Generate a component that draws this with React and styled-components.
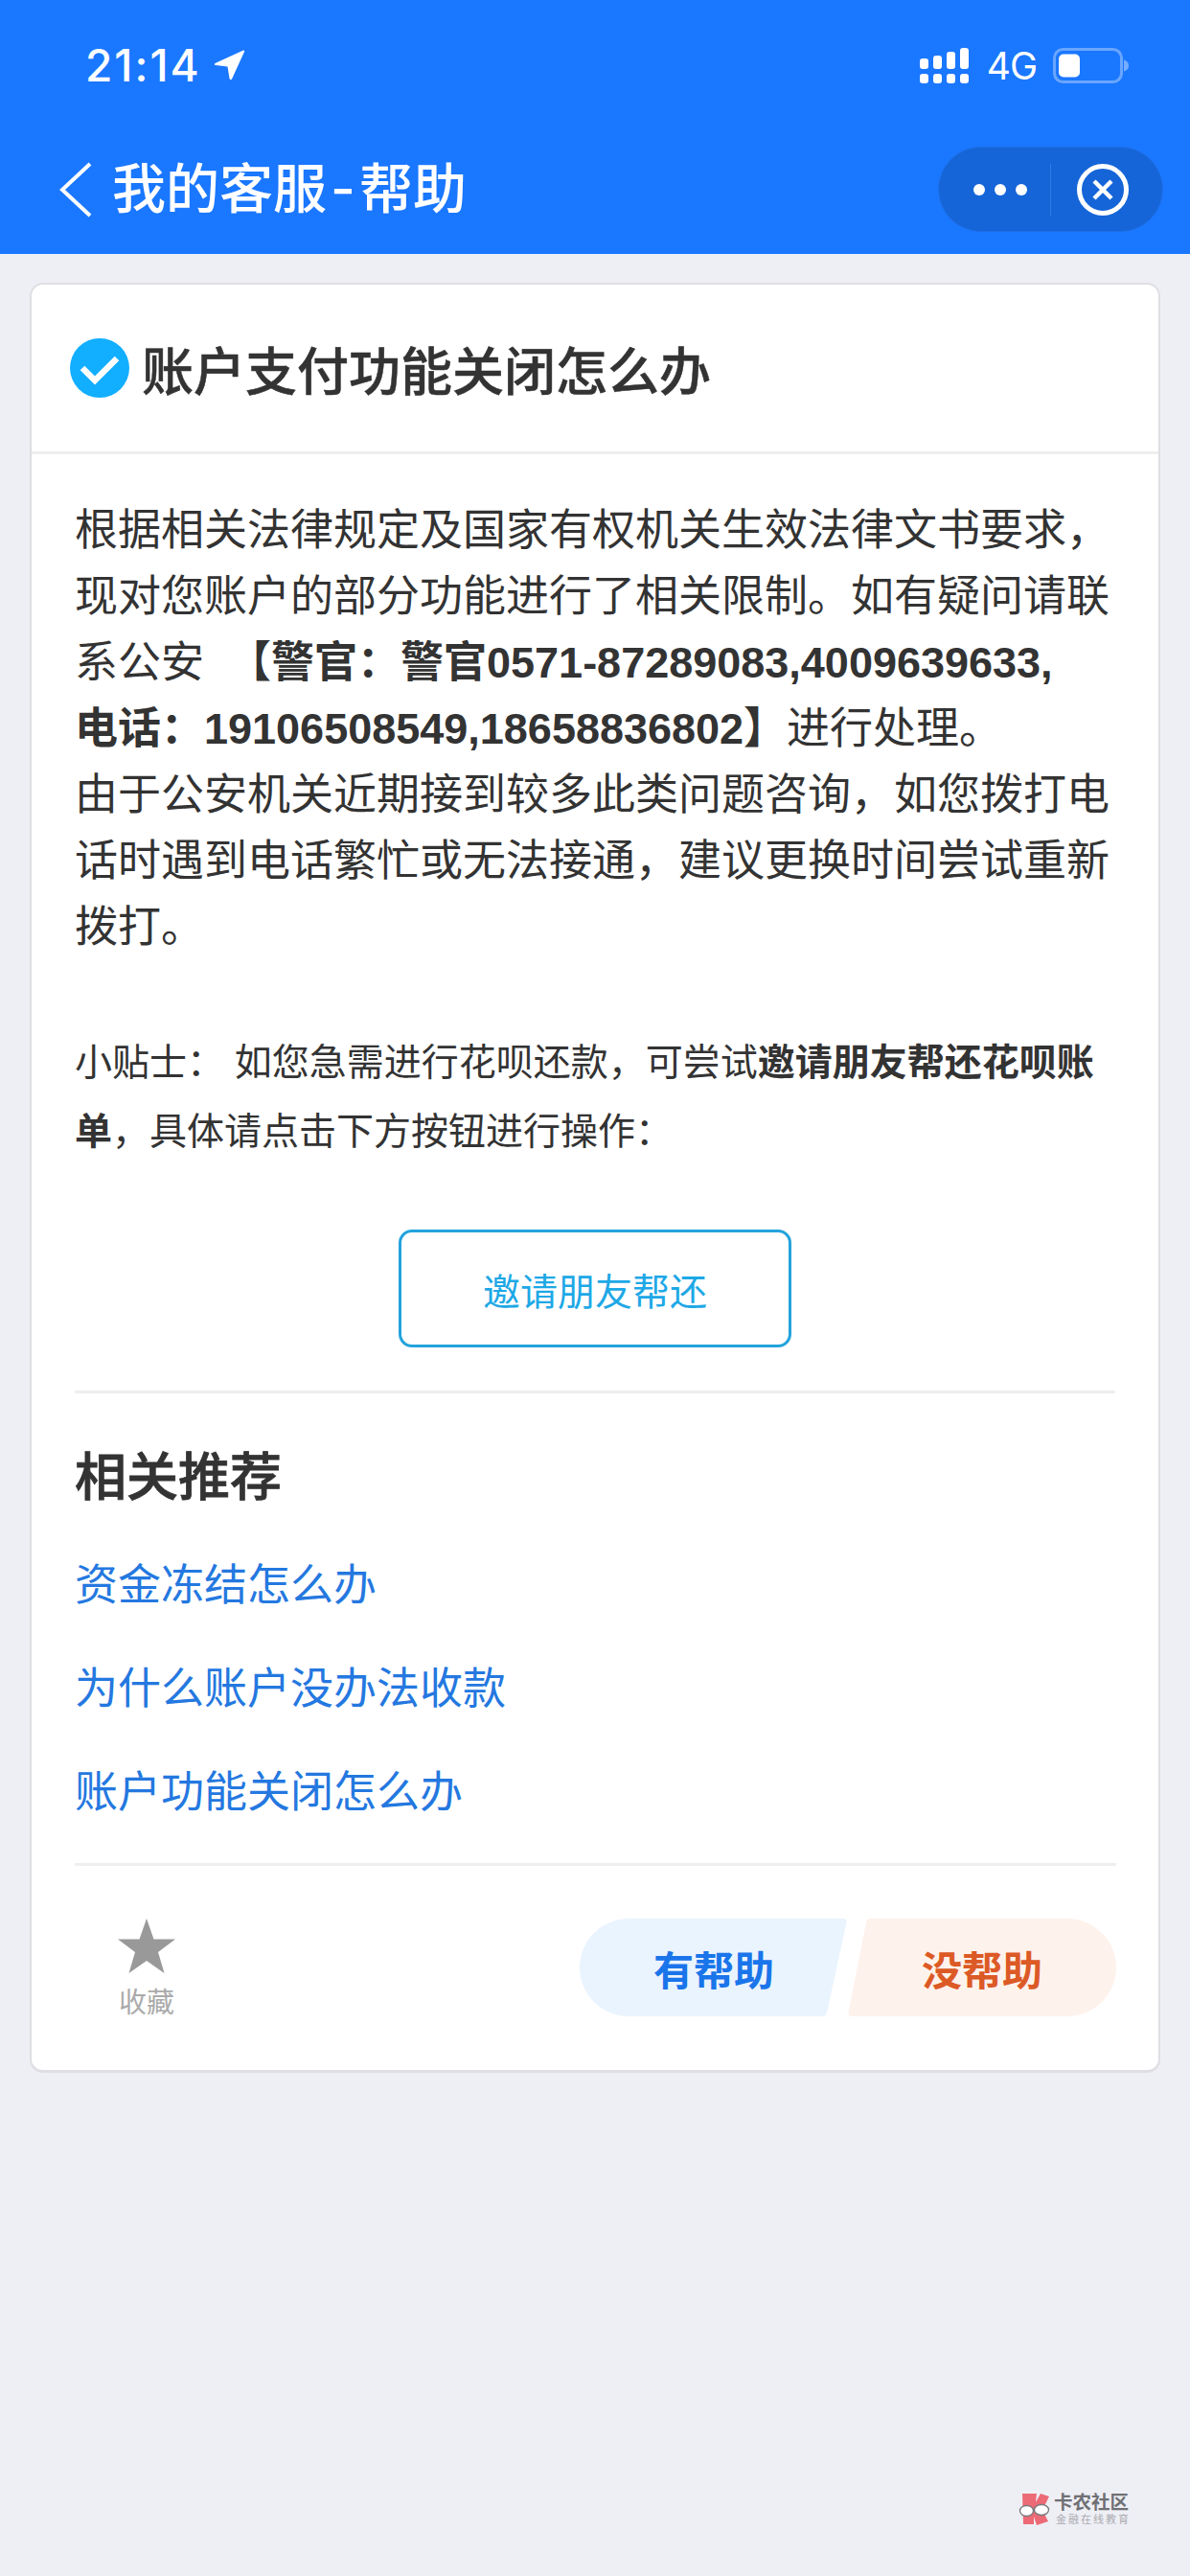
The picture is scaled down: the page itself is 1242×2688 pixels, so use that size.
import React from 'react';
import styled, { createGlobalStyle } from 'styled-components';

const CJK = '"Liberation Sans", "Noto Sans CJK SC", sans-serif';

const GlobalStyle = createGlobalStyle`
  html, body {
    margin: 0;
    padding: 0;
    background: #eeeff5;
  }
  * {
    box-sizing: border-box;
  }
`;

const Page = styled.div`
  position: relative;
  width: 1242px;
  height: 2688px;
  overflow: hidden;
  background: #eeeff5;
  font-family: ${CJK};
  color: #333;
`;

const Header = styled.header`
  height: 265px;
  background: #1a77ff;
  color: #fff;
`;

const StatusBar = styled.div`
  display: flex;
  align-items: center;
  justify-content: space-between;
  height: 136px;
  padding: 0 64px 0 89px;
`;

const TimeGroup = styled.div`
  display: flex;
  align-items: center;
  gap: 13px;
`;

const Time = styled.span`
  font-family: Inter, sans-serif;
  font-size: 46px;
  font-weight: 500;
  letter-spacing: 2px;
`;

const StatusIcons = styled.div`
  display: flex;
  align-items: center;
`;

const Network = styled.span`
  font-family: Inter, sans-serif;
  font-size: 39px;
  font-weight: 400;
  margin: 0 17px 0 19px;
  letter-spacing: -1px;
`;

const NavBar = styled.nav`
  display: flex;
  align-items: center;
  justify-content: space-between;
  height: 89px;
  margin-top: 17px;
  padding: 0 28px 0 62px;
`;

const NavLeft = styled.div`
  display: flex;
  align-items: center;
  gap: 20px;
`;

const NavTitle = styled.h1`
  margin: 0;
  font-size: 56px;
  font-weight: 500;
  line-height: 89px;
`;

const NavHyphen = styled.span`
  margin: 0 4px;
  font-family: Inter, sans-serif;
`;

const Capsule = styled.div`
  display: flex;
  align-items: center;
  width: 235px;
  height: 89px;
  border-radius: 45px;
  background: #1565d8;
  border: 1px solid #1f6fe6;
`;

const MoreDots = styled.div`
  display: flex;
  justify-content: center;
  gap: 10px;
  width: 116px;
  padding-left: 12px;
`;

const Dot = styled.i`
  width: 12px;
  height: 12px;
  border-radius: 50%;
  background: #fff;
`;

const CapsuleLine = styled.div`
  width: 1px;
  height: 54px;
  background: #2f7be6;
`;

const CloseWrap = styled.div`
  display: flex;
  flex: 1;
  justify-content: center;
  padding-right: 8px;
`;

const Card = styled.main`
  width: 1180px;
  margin: 30px 0 0 31px;
  border: 2px solid #dfdfe3;
  border-bottom-width: 3px;
  border-radius: 14px;
  background: #fff;
`;

const TitleRow = styled.div`
  display: flex;
  align-items: center;
  gap: 13px;
  height: 177px;
  padding: 0 0 0 40px;
  border-bottom: 3px solid #eeeeee;
`;

const Title = styled.h2`
  margin: 0;
  font-size: 54px;
  font-weight: 500;
  -webkit-text-stroke: 0.5px #333;
  color: #333;
`;

const Content = styled.div`
  padding: 45px 45px 0;
`;

const Body = styled.p`
  margin: 0;
  font-size: 45px;
  line-height: 69px;
  color: #333;
`;

const Tips = styled.p`
  margin: 71px 0 0;
  font-size: 39px;
  line-height: 72px;
  color: #333;
`;

const Strong = styled.strong`
  font-weight: 700;
`;

const InviteWrap = styled.div`
  display: flex;
  justify-content: center;
  margin-top: 66px;
  padding-bottom: 45px;
  border-bottom: 3px solid #eeeeee;
`;

const InviteButton = styled.button`
  width: 410px;
  height: 123px;
  padding: 0;
  border: 3px solid #23a3dc;
  border-radius: 14px;
  background: #fff;
  font-family: inherit;
  font-size: 39px;
  color: #1ea8e6;
`;

const SectionTitle = styled.h3`
  margin: 58px 0 29px;
  font-size: 54px;
  line-height: 60px;
  font-weight: 500;
  -webkit-text-stroke: 0.8px #333;
  color: #333;
`;

const LinkItem = styled.a`
  display: block;
  font-size: 45px;
  line-height: 108px;
  color: #2478e0;
`;

const Footer = styled.div`
  display: flex;
  align-items: flex-start;
  justify-content: space-between;
  margin: 19px -1px 0 0;
  padding: 55px 0 53px 45px;
  border-top: 3px solid #eeeeee;
`;

const Favorite = styled.div`
  display: flex;
  flex-direction: column;
  align-items: center;
  width: 60px;
  font-size: 29px;
  line-height: 34px;
  color: #aaa;
`;

const FavoriteLabel = styled.span`
  margin-top: 14px;
`;

const Votes = styled.div`
  display: flex;
`;

const VoteButton = styled.button`
  width: 280px;
  height: 102px;
  padding: 0;
  border: 0;
  font-family: inherit;
  font-size: 42px;
  font-weight: 700;
  background: ${p => (p.$bad ? '#fef2ec' : '#eaf4fe')};
  color: ${p => (p.$bad ? '#dc5a26' : '#1a75ea')};
  clip-path: ${p =>
    p.$bad
      ? "path('M23 0 H229 A51 51 0 0 1 229 102 H4 Q0 102 0.5 98 L19 4 Q20 0 23 0 Z')"
      : "path('M51 0 H275 Q279 0 278.5 4 L258 98 Q257 102 253 102 H51 A51 51 0 0 1 51 0 Z')"};
`;

const Watermark = styled.div`
  position: absolute;
  left: 1063px;
  top: 2600px;
  display: flex;
  align-items: center;
  gap: 3px;
`;

const WatermarkText = styled.div`
  display: flex;
  flex-direction: column;
  align-items: flex-start;
`;

const WatermarkName = styled.span`
  font-size: 19.5px;
  line-height: 22px;
  font-weight: 700;
  color: #707074;
`;

const WatermarkSub = styled.span`
  margin-left: 2px;
  font-size: 11px;
  line-height: 15px;
  letter-spacing: 2px;
  color: #aaaab0;
`;

const LocationIcon = () => (
  <svg width="33" height="34" viewBox="0 0 33 34">
    <path d="M31 1.5 L1.5 15 Q0 16.5 2 17 L14.5 18.5 L16.5 31 Q17.5 33 19 31.5 L32 3 Q32.5 1 31 1.5 Z" fill="#fff" />
  </svg>
);

const SignalIcon = () => (
  <svg width="51" height="37" viewBox="0 0 51 37">
    <g fill="#fff">
      <rect x="0" y="27" width="9" height="10" rx="3" />
      <rect x="14" y="27" width="9" height="10" rx="3" />
      <rect x="28" y="27" width="9" height="10" rx="3" />
      <rect x="42" y="27" width="9" height="10" rx="3" />
      <rect x="0" y="11" width="9" height="11" rx="3" />
      <rect x="14" y="8" width="9" height="14" rx="3" />
      <rect x="28" y="4" width="9" height="18" rx="3" />
      <rect x="42" y="0" width="9" height="22" rx="3" />
    </g>
  </svg>
);

const BatteryIcon = () => (
  <svg width="79" height="37" viewBox="0 0 79 37">
    <rect x="1.5" y="1.5" width="70" height="34" rx="9" fill="none" stroke="#fff" strokeOpacity="0.35" strokeWidth="3" />
    <rect x="6" y="6.5" width="22" height="24" rx="5" fill="#fff" />
    <path d="M74 12.5 Q79 14 79 18.5 Q79 23 74 24.5 Z" fill="#fff" fillOpacity="0.4" />
  </svg>
);

const BackIcon = () => (
  <svg width="35" height="58" viewBox="0 0 35 58">
    <path d="M32 2 L3 29 L32 56" fill="none" stroke="#fff" strokeWidth="4" />
  </svg>
);

const CloseIcon = () => (
  <svg width="54" height="54" viewBox="0 0 54 54">
    <circle cx="27" cy="27" r="24.5" fill="none" stroke="#fff" strokeWidth="5" />
    <path d="M18 18 L36 36 M36 18 L18 36" stroke="#fff" strokeWidth="4.5" />
  </svg>
);

const CheckIcon = () => (
  <svg width="62" height="62" viewBox="0 0 62 62">
    <circle cx="31" cy="31" r="31" fill="#12aeff" />
    <path d="M13 31 L26 44 L49 21" fill="none" stroke="#fff" strokeWidth="6.5" />
  </svg>
);

const StarIcon = () => (
  <svg width="60" height="57" viewBox="0 0 60 57">
    <path d="M30 0 L37.5 21.5 L60 21.5 L42 35 L48.5 57 L30 44 L11.5 57 L18 35 L0 21.5 L22.5 21.5 Z" fill="#999" />
  </svg>
);

const LogoIcon = () => (
  <svg width="34" height="37" viewBox="0 0 34 37">
    <path d="M4 2 H19 L18 11 L23 2 L32 5 L25 19 L31 31 L19 35 L16 26 V34 H5 Z" fill="#ec6a76" />
    <g fill="#fff" stroke="#77777a" strokeWidth="1.3">
      <ellipse cx="8.5" cy="20" rx="7" ry="5.5" />
      <ellipse cx="24" cy="19" rx="7.5" ry="5.5" />
    </g>
  </svg>
);

export default function App() {
  return (
    <Page>
      <GlobalStyle />
      <Header>
        <StatusBar>
          <TimeGroup>
            <Time>21:14</Time>
            <LocationIcon />
          </TimeGroup>
          <StatusIcons>
            <SignalIcon />
            <Network>4G</Network>
            <BatteryIcon />
          </StatusIcons>
        </StatusBar>
        <NavBar>
          <NavLeft>
            <BackIcon />
            <NavTitle>我的客服<NavHyphen>-</NavHyphen>帮助</NavTitle>
          </NavLeft>
          <Capsule>
            <MoreDots>
              <Dot />
              <Dot />
              <Dot />
            </MoreDots>
            <CapsuleLine />
            <CloseWrap>
              <CloseIcon />
            </CloseWrap>
          </Capsule>
        </NavBar>
      </Header>

      <Card>
        <TitleRow>
          <CheckIcon />
          <Title>账户支付功能关闭怎么办</Title>
        </TitleRow>
        <Content>
          <Body>
            根据相关法律规定及国家有权机关生效法律文书要求，现对您账户的部分功能进行了相关限制。如有疑问请联系公安{'\u00a0\u00a0'}
            <Strong>【警官：警官0571-87289083,4009639633,<br />电话：19106508549,18658836802】</Strong>
            进行处理。
            <br />
            由于公安机关近期接到较多此类问题咨询，如您拨打电话时遇到电话繁忙或无法接通，建议更换时间尝试重新拨打。
          </Body>
          <Tips>
            小贴士： 如您急需进行花呗还款，可尝试<Strong>邀请朋友帮还花呗账单</Strong>，具体请点击下方按钮进行操作：
          </Tips>
          <InviteWrap>
            <InviteButton>邀请朋友帮还</InviteButton>
          </InviteWrap>
          <SectionTitle>相关推荐</SectionTitle>
          <LinkItem>资金冻结怎么办</LinkItem>
          <LinkItem>为什么账户没办法收款</LinkItem>
          <LinkItem>账户功能关闭怎么办</LinkItem>
          <Footer>
            <Favorite>
              <StarIcon />
              <FavoriteLabel>收藏</FavoriteLabel>
            </Favorite>
            <Votes>
              <VoteButton>有帮助</VoteButton>
              <VoteButton $bad>没帮助</VoteButton>
            </Votes>
          </Footer>
        </Content>
      </Card>

      <Watermark>
        <LogoIcon />
        <WatermarkText>
          <WatermarkName>卡农社区</WatermarkName>
          <WatermarkSub>金融在线教育</WatermarkSub>
        </WatermarkText>
      </Watermark>
    </Page>
  );
}
